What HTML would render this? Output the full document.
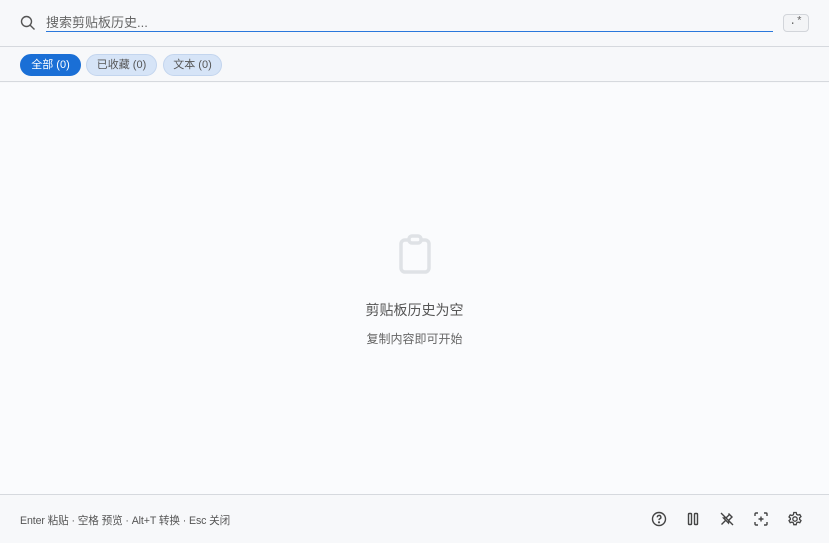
<!DOCTYPE html>
<html><head><meta charset="utf-8"><style>
*{box-sizing:border-box;margin:0;padding:0}
body{width:829px;height:543px;background:#f7f8fa;font-family:"Liberation Sans","Noto Sans CJK SC",sans-serif;position:relative;overflow:hidden;color:#333}
.top{position:absolute;left:0;top:0;width:829px;height:47px;background:#f7f8fa;border-bottom:1px solid #d6d9de}
.input{position:absolute;left:46px;top:14px;width:727px;height:18px;border-bottom:1px solid #2a78dc;font-size:13px;color:#666;line-height:18px}
.rx{position:absolute;left:783px;top:14px;width:26px;height:18px;border:1px solid #d2d5da;border-radius:4px;background:#f3f4f6;font-size:11px;color:#666;text-align:center;line-height:15px;font-family:"Liberation Mono",monospace}
.tabs{position:absolute;left:0;top:48px;width:829px;height:34px;border-bottom:1px solid #d6d9de}
.tab{position:absolute;top:6px;height:22px;border-radius:11px;font-size:11px;line-height:20px;text-align:center;background:#d6e4f7;border:1px solid #c3d5ee;color:#555}
.main{position:absolute;left:0;top:83px;width:829px;height:411px;background:#fafbfd}
.foot{position:absolute;left:0;top:494px;width:829px;height:49px;border-top:1px solid #d6d9de;background:#f7f8fa}
.hint{position:absolute;left:20px;top:18px;font-size:10.6px;color:#555;letter-spacing:-0.1px}
svg.i{position:absolute;top:16px}
</style></head><body>
<div class="top">
<svg style="position:absolute;left:20px;top:15px" width="16" height="16" viewBox="0 0 16 16" fill="none" stroke="#555" stroke-width="1.4"><circle cx="6.5" cy="6.5" r="5"/><path d="M10.2 10.2L14.5 14.5"/></svg>
<div class="input">搜索剪贴板历史...</div>
<div class="rx">.*</div>
</div>
<div class="tabs">
<div class="tab" style="left:20px;width:61px;background:#1a6fd6;border-color:#1a6fd6;color:#fff">全部 (0)</div>
<div class="tab" style="left:86px;width:71px">已收藏 (0)</div>
<div class="tab" style="left:163px;width:59px">文本 (0)</div>
</div>
<div class="main">
<svg style="position:absolute;left:398px;top:151px" width="34" height="40" viewBox="0 0 34 40" fill="none" stroke="#dfe2e6" stroke-width="3.5" stroke-linejoin="round"><rect x="3" y="6" width="28" height="32" rx="4"/><rect x="11" y="2" width="12" height="7" rx="3" fill="#fafbfd"/></svg>
<div style="position:absolute;left:0;width:829px;top:217px;text-align:center;font-size:14px;color:#555">剪贴板历史为空</div>
<div style="position:absolute;left:0;width:829px;top:247px;text-align:center;font-size:12px;color:#666">复制内容即可开始</div>
</div>
<div class="foot">
<div class="hint">Enter 粘贴 · 空格 预览 · Alt+T 转换 · Esc 关闭</div>
<svg class="i" style="left:651px" width="16" height="16" viewBox="0 0 16 16" fill="none" stroke="#444" stroke-width="1.4"><circle cx="8" cy="8" r="6.5"/><path d="M6.3 6.3a1.8 1.8 0 1 1 2.4 1.6c-.5.3-.7.6-.7 1.2"/><circle cx="8" cy="11.3" r=".4" fill="#444"/></svg>
<svg class="i" style="left:685px" width="16" height="16" viewBox="0 0 16 16" fill="none" stroke="#444" stroke-width="1.4"><rect x="3.5" y="2.5" width="3" height="11" rx=".8"/><rect x="9.5" y="2.5" width="3" height="11" rx=".8"/></svg>
<svg class="i" style="left:719px" width="16" height="16" viewBox="0 0 16 16" fill="none" stroke="#444" stroke-width="1.4"><path d="M2 2l12 12M9.5 2.5l4 4M10.5 3.5l-3 3-3 .5 5 5 .5-3 3-3M6.5 9.5L2.5 13.5"/></svg>
<svg class="i" style="left:753px" width="16" height="16" viewBox="0 0 16 16" fill="none" stroke="#444" stroke-width="1.4"><path d="M2 5V3a1 1 0 0 1 1-1h2M11 2h2a1 1 0 0 1 1 1v2M14 11v2a1 1 0 0 1-1 1h-2M5 14H3a1 1 0 0 1-1-1v-2M8 5.5v5M5.5 8h5"/></svg>
<svg class="i" style="left:787px" width="16" height="16" viewBox="0 0 16 16" fill="none" stroke="#444" stroke-width="1.3"><circle cx="8" cy="8" r="2.2"/><path d="M6.8 1.5h2.4l.4 1.8 1.4.8 1.8-.6 1.2 2.1-1.4 1.2v1.6l1.4 1.2-1.2 2.1-1.8-.6-1.4.8-.4 1.8H6.8l-.4-1.8-1.4-.8-1.8.6-1.2-2.1 1.4-1.2V7.2L2 6l1.2-2.1 1.8.6 1.4-.8z"/></svg>
</div>
</body></html>
